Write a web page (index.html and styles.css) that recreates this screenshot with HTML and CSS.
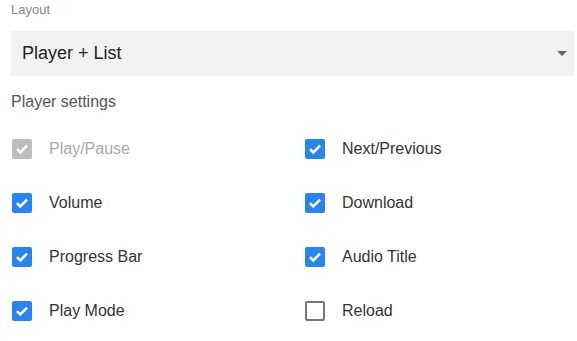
FILE: index.html
```html
<!DOCTYPE html>
<html>
<head>
  <meta charset="utf-8">
  <title>Player settings</title>
  <link rel="stylesheet" href="styles.css">
</head>
<body>
  <div class="panel">
    <div class="field">
      <label class="field-label">Layout</label>
      <div class="select">
        <span class="select-value">Player + List</span>
        <span class="select-arrow"></span>
      </div>
    </div>

    <p class="group-title">Player settings</p>

    <div class="options">
      <label class="opt disabled"><span class="box on"><svg viewBox="0 0 20 20"><path d="M5 10.2l3.3 3.3 6.7-6.8"/></svg></span>Play/Pause</label>
      <label class="opt"><span class="box on"><svg viewBox="0 0 20 20"><path d="M5 10.2l3.3 3.3 6.7-6.8"/></svg></span>Next/Previous</label>
      <label class="opt"><span class="box on"><svg viewBox="0 0 20 20"><path d="M5 10.2l3.3 3.3 6.7-6.8"/></svg></span>Volume</label>
      <label class="opt"><span class="box on"><svg viewBox="0 0 20 20"><path d="M5 10.2l3.3 3.3 6.7-6.8"/></svg></span>Download</label>
      <label class="opt"><span class="box on"><svg viewBox="0 0 20 20"><path d="M5 10.2l3.3 3.3 6.7-6.8"/></svg></span>Progress Bar</label>
      <label class="opt"><span class="box on"><svg viewBox="0 0 20 20"><path d="M5 10.2l3.3 3.3 6.7-6.8"/></svg></span>Audio Title</label>
      <label class="opt"><span class="box on"><svg viewBox="0 0 20 20"><path d="M5 10.2l3.3 3.3 6.7-6.8"/></svg></span>Play Mode</label>
      <label class="opt"><span class="box"></span>Reload</label>
    </div>
  </div>
</body>
</html>
```

FILE: styles.css
```css
body {
  margin: 0;
  background: #fff;
  font-family: "Liberation Sans", Arial, sans-serif;
  color: #333;
}
.panel { padding: 2px 3px 0 11px; }

.field-label {
  display: block;
  font-size: 13px;
  line-height: 16px;
  color: #888;
}
.select {
  margin-top: 13px;
  height: 45px;
  background: #f2f2f2;
  display: flex;
  align-items: center;
  padding: 0 7px 0 11px;
}
.select-value {
  flex: 1;
  font-size: 18px;
  color: #222;
}
.select-arrow {
  width: 0; height: 0;
  border-left: 5px solid transparent;
  border-right: 5px solid transparent;
  border-top: 5px solid #666;
}

.group-title {
  margin: 17px 0 0;
  font-size: 16px;
  line-height: 18px;
  color: #555;
}

.options {
  display: grid;
  grid-template-columns: 293px 1fr;
  grid-auto-rows: 54px;
  margin-top: 11px;
  padding-left: 1px;
}
.opt {
  display: flex;
  align-items: center;
  gap: 17px;
  font-size: 16px;
  color: #333;
}
.opt.disabled { color: #aaa; }

.box {
  width: 20px; height: 20px;
  box-sizing: border-box;
  border: 2px solid #767676;
  border-radius: 2px;
  display: flex;
}
.box.on {
  border: none;
  background: #2a84ee;
}
.opt.disabled .box.on { background: #bdbdbd; }
.box svg {
  width: 20px; height: 20px;
  fill: none;
  stroke: #fff;
  stroke-width: 2.5;
}
```
